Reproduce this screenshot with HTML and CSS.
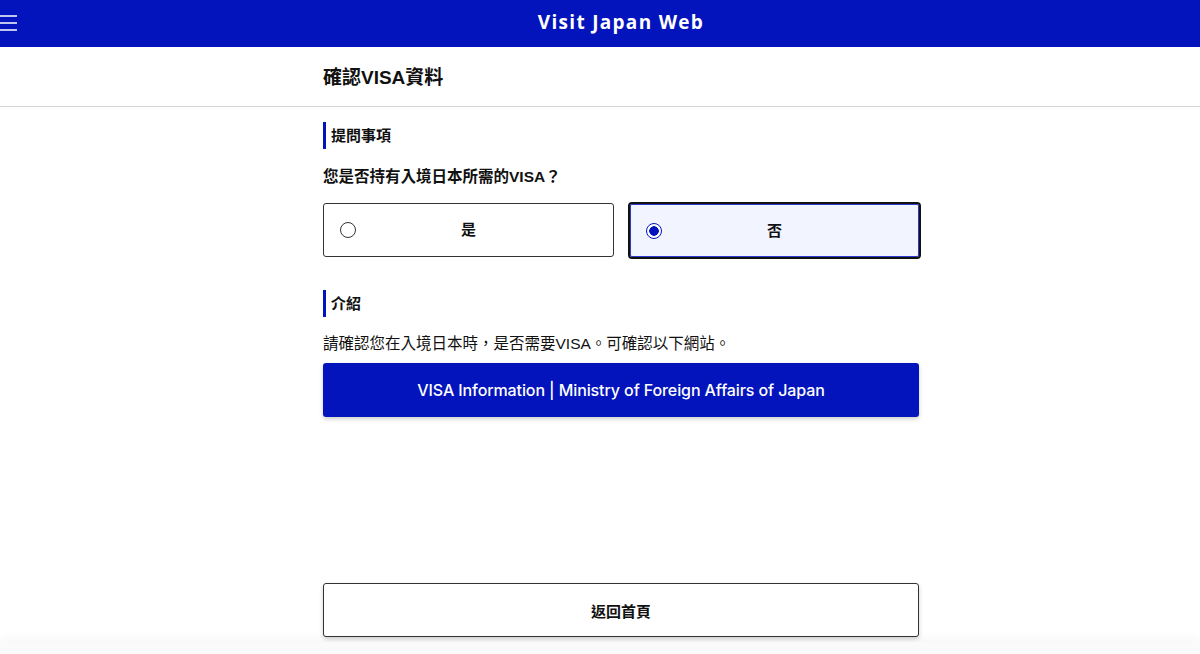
FILE: index.html
```html
<!DOCTYPE html>
<html lang="zh-Hant">
<head>
	<meta charset="UTF-8">
	<title>Visit Japan Web</title>
	<link rel="stylesheet" href="styles.css">
</head>
<body>
	<div class="header">
		<a href="javascript:;" class="menu">
			<svg width="18" height="16" viewBox="0 0 18 16"><path d="M0 1h17M0 8h17M0 15h17" stroke="#fff" stroke-width="1.6"/></svg>
		</a>
		<div class="brand">Visit Japan Web</div>
	</div>
	<div class="title-bar">
		<div class="wrap"><h1>確認VISA資料</h1></div>
	</div>
	<div class="wrap main">
		<h2 class="sec">提問事項</h2>
		<p class="question">您是否持有入境日本所需的VISA？</p>
		<div class="choices">
			<label class="choice"><span class="radio"></span><span class="label">是</span></label>
			<label class="choice checked"><span class="radio"></span><span class="label">否</span></label>
		</div>
		<h2 class="sec sec2">介紹</h2>
		<p class="desc">請確認您在入境日本時，是否需要VISA。可確認以下網站。</p>
		<a href="javascript:;" class="btn btn-blue">VISA Information | Ministry of Foreign Affairs of Japan</a>
		<div class="spacer"></div>
		<a href="javascript:;" class="btn btn-white">返回首頁</a>
	</div>
	<div class="footer"></div>
</body>
</html>
```

FILE: styles.css
```css
*{
	margin: 0;
	padding: 0;
	box-sizing: border-box;
}
body{
	font-family: "Liberation Sans", "Noto Sans CJK TC", sans-serif;
	color: #111;
	background: #fff;
	height: 654px;
	overflow: hidden;
}
.header{
	height: 47px;
	background-color: #0314bd;
	display: flex;
	align-items: center;
	justify-content: center;
	padding-left: 42px;
	padding-bottom: 3px;
	position: relative;
}
.menu{
	position: absolute;
	left: 0;
	top: 15px;
	display: block;
	line-height: 0;
}
.brand{
	font-family: "Open Sans", sans-serif;
	font-weight: 700;
	font-size: 19px;
	letter-spacing: 1.3px;
	color: #fff;
}
.title-bar{
	height: 60px;
	border-bottom: 1px solid #d6d6d6;
	display: flex;
	align-items: center;
}
.wrap{
	width: 596px;
	margin-left: 323px;
}
h1{
	font-size: 19px;
	font-weight: 700;
	margin-top: -3px;
}
.main{
	padding-top: 15px;
	display: flex;
	flex-direction: column;
}
.sec{
	font-size: 15px;
	font-weight: 700;
	border-left: 3px solid #0314bd;
	padding-left: 5px;
	height: 27px;
	line-height: 27px;
}
.question{
	font-size: 15.5px;
	font-weight: 700;
	margin-top: 17px;
	line-height: 22px;
}
.choices{
	display: flex;
	gap: 16px;
	margin-top: 15px;
}
.choice{
	flex: 1;
	height: 54px;
	border: 1px solid #333;
	border-radius: 3px;
	display: flex;
	align-items: center;
	padding-left: 16px;
	cursor: pointer;
}
.choice .label{
	flex: 1;
	text-align: center;
	font-size: 15px;
	font-weight: 700;
	padding-right: 32px;
	margin-top: -4px;
}
.radio{
	width: 16px;
	height: 16px;
	border: 1px solid #333;
	border-radius: 50%;
	background: #fff;
}
.choice.checked{
	border: 2px solid #111;
	box-shadow: inset 0 0 0 1px #2b3ad0;
	background-color: #f2f5ff;
	border-radius: 4px;
	margin: -1px -2px 0 -2px;
	height: 57px;
	padding-left: 16px;
}
.choice.checked .label{
	margin-top: -2px;
}
.choice.checked .radio{
	border: 1.5px solid #0314bd;
	background: radial-gradient(circle, #0314bd 0 4.5px, #fff 5px);
}
.sec2{
	margin-top: 31px;
}
.desc{
	font-size: 15.5px;
	margin-top: 16px;
	line-height: 22px;
}
.btn{
	display: flex;
	align-items: center;
	justify-content: center;
	height: 54px;
	border-radius: 3px;
	font-size: 15px;
	text-decoration: none;
	box-shadow: 0 2px 4px rgba(0,0,0,0.2);
}
.btn-blue{
	margin-top: 8px;
	background-color: #0314bd;
	color: #fff;
	font-family: "Inter", "Liberation Sans", sans-serif;
	font-size: 16px;
	font-weight: 500;
	letter-spacing: -0.1px;
}
.btn-white{
	border: 1px solid #333;
	color: #111;
	font-weight: 700;
	background: #fff;
}
.btn-white span{
	display: block;
}
.spacer{
	height: 166px;
}
.footer{
	position: absolute;
	left: 0;
	right: 0;
	top: 642px;
	height: 20px;
	background: #fafafa;
	box-shadow: 0 -3px 10px rgba(0,0,0,0.04);
}
```
